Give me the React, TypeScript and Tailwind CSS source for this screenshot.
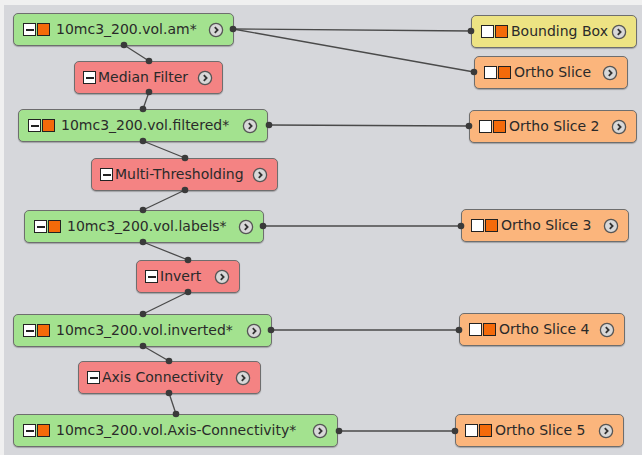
import React from "react";

type Kind = "data" | "module" | "display" | "box";

type Node = {
  id: string;
  label: string;
  kind: Kind;
  x: number;
  y: number;
  w: number;
};

const nodes: Node[] = [
  { id: "am", label: "10mc3_200.vol.am*", kind: "data", x: 13, y: 13, w: 221 },
  { id: "median", label: "Median Filter", kind: "module", x: 74, y: 61, w: 149 },
  { id: "filtered", label: "10mc3_200.vol.filtered*", kind: "data", x: 18, y: 109, w: 250 },
  { id: "multi", label: "Multi-Thresholding", kind: "module", x: 91, y: 158, w: 187 },
  { id: "labels", label: "10mc3_200.vol.labels*", kind: "data", x: 24, y: 210, w: 240 },
  { id: "invert", label: "Invert", kind: "module", x: 136, y: 260, w: 104 },
  { id: "inverted", label: "10mc3_200.vol.inverted*", kind: "data", x: 13, y: 314, w: 259 },
  { id: "axis", label: "Axis Connectivity", kind: "module", x: 78, y: 361, w: 183 },
  { id: "axisc", label: "10mc3_200.vol.Axis-Connectivity*", kind: "data", x: 13, y: 414, w: 325 },
  { id: "bbox", label: "Bounding Box", kind: "box", x: 471, y: 15, w: 166 },
  { id: "os1", label: "Ortho Slice", kind: "display", x: 474, y: 56, w: 154 },
  { id: "os2", label: "Ortho Slice 2", kind: "display", x: 469, y: 110, w: 168 },
  { id: "os3", label: "Ortho Slice 3", kind: "display", x: 461, y: 209, w: 168 },
  { id: "os4", label: "Ortho Slice 4", kind: "display", x: 459, y: 313, w: 166 },
  { id: "os5", label: "Ortho Slice 5", kind: "display", x: 455, y: 414, w: 169 },
];

const links: [number, number, number, number][] = [
  [233, 29, 471, 31],
  [233, 29, 474, 72],
  [124, 45, 149, 61],
  [149, 92, 143, 109],
  [143, 141, 185, 158],
  [269, 125, 469, 126],
  [185, 190, 143, 210],
  [263, 226, 461, 226],
  [143, 242, 188, 260],
  [188, 292, 143, 314],
  [271, 330, 459, 330],
  [143, 346, 169, 361],
  [169, 393, 176, 414],
  [339, 431, 455, 431],
];

const dots: [number, number][] = [
  [233, 29], [471, 31], [474, 72],
  [124, 45], [149, 61], [149, 92], [143, 109],
  [143, 141], [185, 158], [269, 125], [469, 126],
  [185, 190], [143, 210], [263, 226], [461, 226],
  [143, 242], [188, 260], [188, 292], [143, 314],
  [271, 330], [459, 330], [143, 346], [169, 361],
  [169, 393], [176, 414], [339, 431], [455, 431],
];

const kindStyle: Record<Kind, string> = {
  data: "bg-[#a3e28f]",
  module: "bg-[#f48383]",
  display: "bg-[#fbb57c]",
  box: "bg-[#ede383]",
};

const textGap: Record<Kind, string> = {
  data: "ml-[6px]",
  module: "ml-[2px]",
  display: "ml-[3px]",
  box: "ml-[3px]",
};

function MinusBox() {
  return (
    <span className="flex h-[13px] w-[13px] items-center justify-center border border-[#222] bg-white">
      <span className="h-[2px] w-[8px] bg-[#222]" />
    </span>
  );
}

function WhiteBox() {
  return <span className="h-[13px] w-[13px] border border-[#222] bg-white" />;
}

function OrangeBox() {
  return <span className="h-[13px] w-[13px] border border-[#222] bg-[#f46a0a]" />;
}

function MoreButton() {
  return (
    <svg width="16" height="16" viewBox="0 0 16 16" className="shrink-0">
      <circle cx="8" cy="8" r="6.6" fill="#d8d8d8" stroke="#555" strokeWidth="1.3" />
      <path d="M6.8 5.2 L9.6 8 L6.8 10.8" fill="none" stroke="#333" strokeWidth="1.8" />
    </svg>
  );
}

function GraphNode({ node }: { node: Node }) {
  return (
    <div
      className={`absolute flex h-[33px] items-center rounded-[5px] border border-[#6e6e6e] pr-[9px] shadow-[0_1px_1px_rgba(0,0,0,0.25)] ${kindStyle[node.kind]} ${
        node.kind === "module" ? "pl-[8px]" : "pl-[9px]"
      }`}
      style={{ left: node.x, top: node.y, width: node.w }}
    >
      <div className="flex items-center gap-[1px]">
        {node.kind === "module" && <MinusBox />}
        {node.kind === "data" && (
          <>
            <MinusBox />
            <OrangeBox />
          </>
        )}
        {(node.kind === "display" || node.kind === "box") && (
          <>
            <WhiteBox />
            <OrangeBox />
          </>
        )}
      </div>
      <span className={`flex-1 whitespace-nowrap text-[14px] text-[#2a2a2a] ${textGap[node.kind]}`}>
        {node.label}
      </span>
      <MoreButton />
    </div>
  );
}

export default function App() {
  return (
    <div
      className="relative h-[455px] w-[642px] overflow-hidden border-l-[4px] border-t-[5px] border-[#f0f0f0] bg-[#d6d7db]"
      style={{ fontFamily: "'DejaVu Sans', Verdana, sans-serif" }}
    >
      <div className="absolute left-[-4px] top-[-5px] h-[455px] w-[642px]">
        <svg width="642" height="455" className="absolute left-0 top-0">
          {links.map(([x1, y1, x2, y2], i) => (
            <line key={i} x1={x1} y1={y1} x2={x2} y2={y2} stroke="#4a4a4a" strokeWidth="1.3" />
          ))}
        </svg>
        {nodes.map((n) => (
          <GraphNode key={n.id} node={n} />
        ))}
        <svg width="642" height="455" className="pointer-events-none absolute left-0 top-0">
          {dots.map(([cx, cy], i) => (
            <circle key={i} cx={cx} cy={cy} r="3.3" fill="#3a3a3a" />
          ))}
        </svg>
      </div>
    </div>
  );
}
